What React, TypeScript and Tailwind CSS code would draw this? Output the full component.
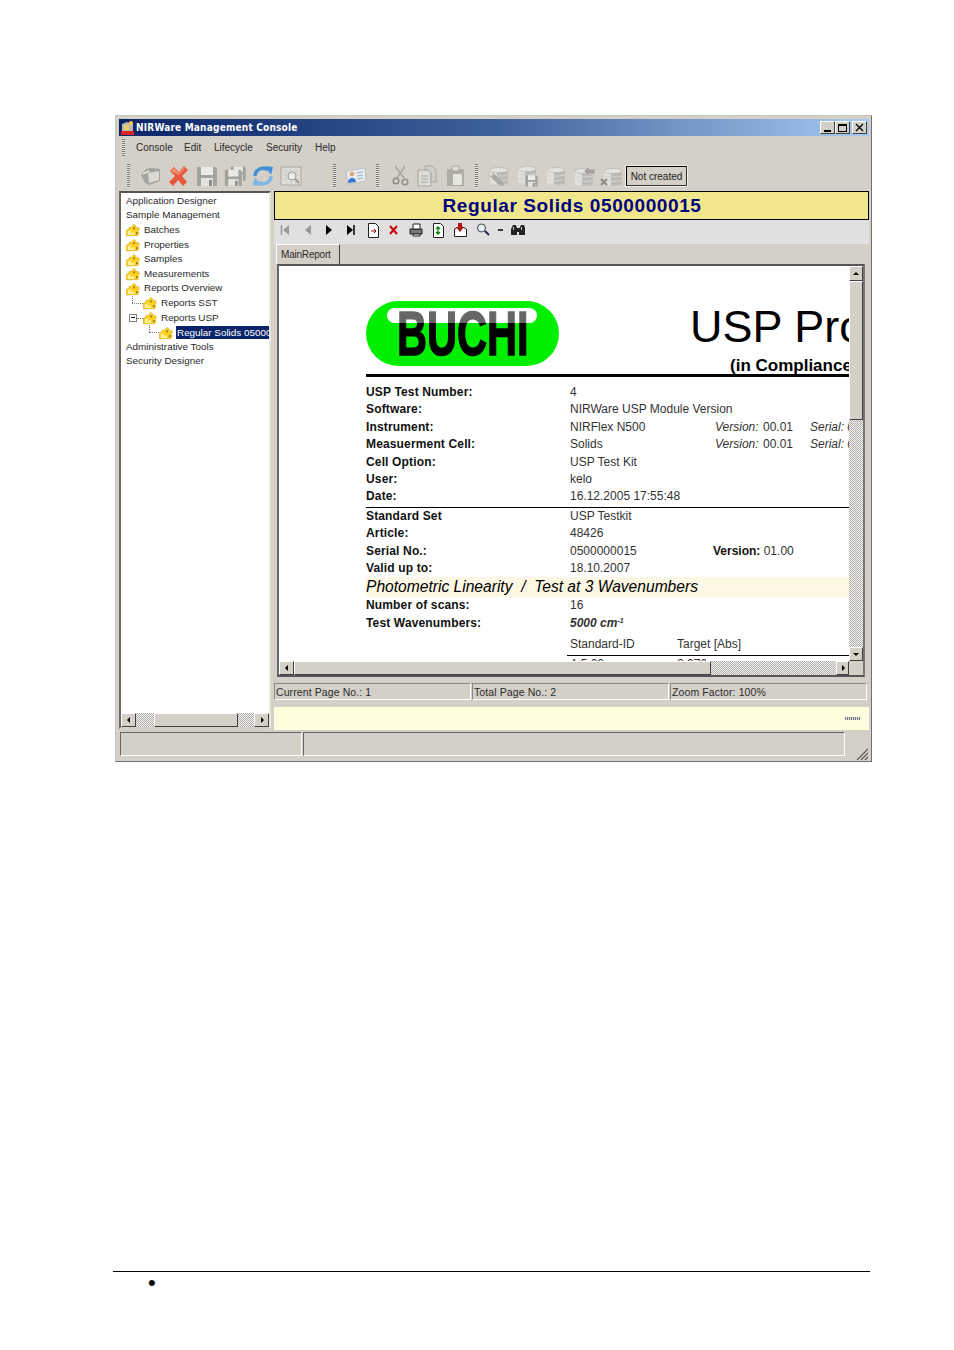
import React from "react";

const Grip = ({ h = 24 }: { h?: number }) => (
  <div className="w-[3px] shrink-0 bg-[repeating-linear-gradient(to_bottom,#777_0_1px,#e8e6e0_1px_2px)]" style={{ height: h }} />
);

const Puzzle = () => (
  <svg width="14" height="14" viewBox="0 0 14 14" className="shrink-0">
    <path d="M0.500 13V7l2-.5 1-2.500 2 .5L7.500 1.500 10 3v2l2.500-.5 1 2.500-2 1 1.500 1.500-1 3z" fill="#ffd21f" stroke="#c79a10" strokeWidth=".5" />
    <path d="M2 12V8l3-.5L4.500 10.500 8 9v3z" fill="#fff3a0" />
    <path d="M7 4l2 1-1 2zM10 9l2 1-2 1.500z" fill="#7a5c08" />
  </svg>
);

const TreeRow = ({ label, indent = 0, icon = false, box = false, sel = false, dots = 0, v = -1 }: { label: string; indent?: number; icon?: boolean; box?: boolean; sel?: boolean; dots?: number; v?: number }) => (
  <div className="h-[14.6px] flex items-center whitespace-nowrap overflow-hidden relative" style={{ paddingLeft: indent }}>
    {v >= 0 && <div className="absolute top-0 h-[7px] w-0 border-l border-dotted border-[#777]" style={{ left: v }} />}
    {dots > 0 && <div className="h-0 border-t border-dotted border-[#777] shrink-0" style={{ width: dots }} />}
    {box && (
      <>
        <div className="absolute left-[3px] top-[3px] w-[8px] h-[8px] border border-[#808080] bg-white flex items-center justify-center">
          <div className="w-[4px] h-px bg-black" />
        </div>
        <div className="absolute left-[11px] top-[7px] w-[6px] h-0 border-t border-dotted border-[#777]" />
      </>
    )}
    {icon && <Puzzle />}
    {sel ? (
      <span className="ml-[3px] bg-[#0a246a] text-white pl-px h-[13px] leading-[13px] flex-1 overflow-hidden">{label}</span>
    ) : (
      <span className={icon ? "ml-[4px]" : "ml-0"}>{label}</span>
    )}
  </div>
);

const I = ({ children, w = 22, ml = 0 }: { children: React.ReactNode; w?: number; ml?: number }) => (
  <svg width={w} height="22" viewBox="0 0 22 22" className="shrink-0" style={{ marginLeft: ml }}>
    {children}
  </svg>
);

const Db = ({ x = 0, y = 0 }: { x?: number; y?: number }) => (
  <g transform={`translate(${x} ${y})`}>
    <path d="M2 5v13c0 2 18 2 18 0V5z" fill="#bcbab4" />
    <path d="M2 5v13c0 1 4 1.600 7 1.800V6z" fill="#e0dfda" />
    <ellipse cx="11" cy="5" rx="9" ry="2.500" fill="#e4e3de" stroke="#a8a8a2" strokeWidth=".5" />
    <path d="M2 9.500c0 2 18 2 18 0M2 14c0 2 18 2 18 0" fill="none" stroke="#d6d5cf" />
  </g>
);

const Floppy = ({ x = 0, y = 0, s = 1 }: { x?: number; y?: number; s?: number }) => (
  <g transform={`translate(${x} ${y}) scale(${s})`}>
    <path d="M1 2h18l2 2v17H1z" fill="#a3a39e" />
    <path d="M5 2h12v8H5z" fill="#ebeae5" />
    <path d="M5 13h12v8H5z" fill="#e4e3de" />
    <path d="M13 15h3v6h-3z" fill="#8f8f8a" />
  </g>
);

const Row = ({ l, v, extra, it }: { l: string; v: React.ReactNode; extra?: React.ReactNode; it?: boolean }) => (
  <div className="h-[17.4px] leading-[17px] flex whitespace-nowrap">
    <div className="w-[204px] shrink-0 font-bold text-[12px] tracking-[0.15px] text-[#111]">{l}</div>
    <div className={"w-[145px] shrink-0 text-[#333] text-[12px] " + (it ? "font-bold italic" : "")}>{v}</div>
    {extra}
  </div>
);

const Ver = ({ num }: { num: string }) => (
  <>
    <div className="w-[48px] shrink-0 italic text-[#333] text-[12px]">Version:</div>
    <div className="w-[47px] shrink-0 text-[#333] text-[12px]">{num}</div>
    <div className="italic text-[#333] text-[12px]">Serial: 0</div>
  </>
);

const Arrow = ({ d }: { d: "l" | "r" | "u" | "d" }) => {
  const p = { l: "M5 1v6L2 4z", r: "M3 1v6l3-3z", u: "M1 5h6L4 2z", d: "M1 3h6L4 6z" }[d];
  return (
    <svg width="8" height="8" viewBox="0 0 8 8">
      <path d={p} fill="#000" />
    </svg>
  );
};

const SBtn = ({ d, cls = "" }: { d: "l" | "r" | "u" | "d"; cls?: string }) => (
  <div className={"bg-[#d4d0c8] border border-t-white border-l-white border-r-[#404040] border-b-[#404040] flex items-center justify-center shrink-0 " + cls}>
    <Arrow d={d} />
  </div>
);

const Dither = "bg-[repeating-conic-gradient(#b0aea8_0_25%,#f4f3f0_0_50%)] bg-[length:2px_2px]";
const Thumb = "bg-[#d4d0c8] border border-t-white border-l-white border-r-[#404040] border-b-[#404040]";

export default function App() {
  return (
    <div className="w-[954px] h-[1350px] bg-white overflow-hidden font-['Liberation_Sans',Arial,sans-serif] pt-[115px]">
      <div className="ml-[115px] w-[757px] h-[647px] border border-[#c8c6c0] border-r-[#707070] border-b-[#707070] bg-[#d4d0c8] pl-[3px] pr-[2px] pt-[3px] flex flex-col text-[9.900px] text-[#2a2a2a]">
        {/* Title bar */}
        <div className="h-[17px] shrink-0 flex items-center bg-[linear-gradient(to_right,#0a246a_0%,#3d6199_50%,#a6caf0_100%)] pl-[1px] pr-[1px]">
          <svg width="15" height="16" viewBox="0 0 15 16" className="shrink-0">
            <path d="M2 4l5-2 6 2v7H2z" fill="#b9b7ae" />
            <path d="M1 11h13v4H1z" fill="#d22" />
            <circle cx="11" cy="3" r="2" fill="#fc3" />
            <path d="M4 5h5v5H4z" fill="#e8d070" />
          </svg>
          <span className="ml-[1px] text-white font-bold text-[10.500px] tracking-[0.2px] font-['DejaVu_Sans',sans-serif] scale-x-[0.86] origin-left whitespace-nowrap">NIRWare Management Console</span>
          <div className="ml-auto flex items-center pr-[1px]">
            {["min", "max", "close"].map((k) => (
              <div key={k} className={"w-[15px] h-[13px] bg-[#d4d0c8] border border-t-white border-l-white border-r-[#404040] border-b-[#404040] flex items-center justify-center " + (k === "max" ? "mr-[2px]" : "")}>
                {k === "min" && <div className="w-[7px] h-[2px] bg-black mt-[6px]" />}
                {k === "max" && <div className="w-[9px] h-[8px] border border-black border-t-2" />}
                {k === "close" && (
                  <svg width="9" height="9" viewBox="0 0 9 9">
                    <path d="M1 1l7 7M8 1L1 8" stroke="#000" strokeWidth="1.300" />
                  </svg>
                )}
              </div>
            ))}
          </div>
        </div>
        {/* Menu */}
        <div className="h-[25px] shrink-0 flex items-center pl-[3px] pb-[3px] text-[10px]">
          <Grip h={17} />
          <span className="ml-[11px] w-[48px]">Console</span>
          <span className="w-[30px]">Edit</span>
          <span className="w-[52px]">Lifecycle</span>
          <span className="w-[49px]">Security</span>
          <span>Help</span>
        </div>
        {/* Toolbar */}
        <div className="h-[30px] shrink-0 flex items-center pl-[8px]">
          <Grip h={24} />
          <I ml={10}>
            <path d="M1 10l5-6 5-1 9 1v12l-11 4-4-2z" fill="#a3a39d" />
            <path d="M8 8l11-2v9L9 18z" fill="#dad9d3" />
            <path d="M3 9l6-3" stroke="#e8e8e4" strokeWidth="1.500" />
          </I>
          <I ml={6}>
            <path d="M2 6l4-4 5 5 5-6 4 4-6 6 5 6-4 4-5-6-5 6-4-4 6-6z" fill="#e8583c" />
            <path d="M3 6l3-3 5 5 5-6 1 1-6 7-2-1z" fill="#f2927a" />
          </I>
          <I ml={6}><Floppy /></I>
          <I ml={6}>
            <Floppy x={6} y={0} s={0.75} />
            <Floppy x={0} y={3} s={0.85} />
          </I>
          <I ml={6}>
            <path d="M3 11a8 8 0 0 1 13-6" fill="none" stroke="#3f8fd8" strokeWidth="3.500" />
            <path d="M13 1l8 1-2 8z" fill="#3f8fd8" />
            <path d="M19 11a8 8 0 0 1-13 6" fill="none" stroke="#7fb5e5" strokeWidth="3.500" />
            <path d="M9 21l-8-1 2-8z" fill="#7fb5e5" />
          </I>
          <I ml={6}>
            <path d="M1 2h20v18H1z" fill="#dedDd8" stroke="#aaa9a3" />
            <path d="M1 6h20M1 10h20M1 14h20M6 2v18M11 2v18M16 2v18" stroke="#c4c3bd" strokeWidth=".6" />
            <circle cx="12" cy="11" r="4" fill="#ecebe7" stroke="#9a9a95" />
            <path d="M15 14l4 4" stroke="#9a9a95" strokeWidth="2" />
          </I>
          <div className="ml-[31px]"><Grip h={24} /></div>
          <I ml={9}>
            <path d="M1 6l19-3 1 13-18 3z" fill="#e6ebf0" stroke="#a8b0b8" strokeWidth=".6" />
            <circle cx="7" cy="9" r="2.300" fill="#e0a868" />
            <path d="M3 18c-.5-6 8-7 8-1z" fill="#3a78d0" />
            <path d="M12 8l6-1M12 11l6-1M12 14l6-1" stroke="#a0b0bc" />
          </I>
          <div className="ml-[9px]"><Grip h={24} /></div>
          <I ml={11}>
            <path d="M5 1l9 12M15 1L7 13" stroke="#a8a8a2" strokeWidth="1.500" fill="none" />
            <circle cx="6" cy="16" r="2.800" fill="none" stroke="#8f8f8a" strokeWidth="1.500" />
            <circle cx="15" cy="17" r="2.800" fill="none" stroke="#8f8f8a" strokeWidth="1.500" />
          </I>
          <I ml={5}>
            <path d="M1 5h10l3 3v13H1z" fill="#dddcd6" stroke="#a5a5a0" />
            <path d="M8 1h7l4 4v12h-5V8l-3-3H8z" fill="#cfcec8" stroke="#a5a5a0" />
            <path d="M4 11h7M4 14h7M4 17h7" stroke="#a5a5a0" />
          </I>
          <I ml={7}>
            <path d="M1 4h17v17H1z" fill="#aeada6" />
            <path d="M6 1h7v5H6z" fill="#dddcd6" stroke="#8f8f8a" strokeWidth=".6" />
            <path d="M7 9h9v11H7z" fill="#e6e5e0" />
          </I>
          <div className="ml-[7px]"><Grip h={24} /></div>
          <I ml={9}>
            <Db x={1} y={0} />
            <path d="M1 9l4-2 10 9 2 4-3 1-4-3z" fill="#a9a8a2" />
            <circle cx="4" cy="9" r="2" fill="#d8d7d2" />
          </I>
          <I ml={7}>
            <Db x={0} y={-1} />
            <Floppy x={9} y={9} s={0.6} />
          </I>
          <I ml={7}><Db /></I>
          <I ml={8}>
            <Db x={-2} y={1} />
            <path d="M9 6l5-5v3h6v5h-6v3z" fill="#a3a29c" stroke="#e4e3de" strokeWidth=".5" />
          </I>
          <I ml={3}>
            <Db x={2} y={1} />
            <path d="M1 14l6 6M7 14l-6 6" stroke="#8f8f8a" strokeWidth="2.200" />
          </I>
          <div className="ml-[4px] w-[61px] h-[20px] border border-t-black border-l-black border-r-[#333] border-b-[#333] outline-1 outline-[#f0eee8] flex items-center justify-center text-[10px] whitespace-nowrap text-[#222]">Not created</div>
        </div>
        {/* Main */}
        <div className="h-[540px] shrink-0 flex items-start">
          {/* Tree */}
          <div className="w-[152px] h-[538px] shrink-0 bg-white border-2 border-t-[#555] border-l-[#666] border-r-[#e8e6e0] border-b-[#d4d0c8] flex flex-col">
            <div className="flex-1 pl-[5px] pt-[1px] overflow-hidden">
              <TreeRow label="Application Designer" />
              <TreeRow label="Sample Management" />
              <TreeRow label="Batches" icon />
              <TreeRow label="Properties" icon />
              <TreeRow label="Samples" icon />
              <TreeRow label="Measurements" icon />
              <TreeRow label="Reports Overview" icon />
              <TreeRow label="Reports SST" icon indent={6} dots={11} v={6} />
              <TreeRow label="Reports USP" icon indent={17} box />
              <TreeRow label="Regular Solids 0500000015" icon indent={23} dots={10} v={23} sel />
              <TreeRow label="Administrative Tools" />
              <TreeRow label="Security Designer" />
            </div>
            <div className="h-[14px] shrink-0 flex bg-white">
              <SBtn d="l" cls="w-[15px] h-[14px]" />
              <div className={"w-[18px] " + Dither} />
              <div className={"w-[84px] " + Thumb} />
              <div className={"flex-1 " + Dither} />
              <SBtn d="r" cls="w-[15px] h-[14px]" />
            </div>
          </div>
          {/* Right */}
          <div className="ml-[3px] w-[595px] h-[539px] shrink-0 flex flex-col">
            <div className="h-[29px] shrink-0 bg-[#f0e68c] border border-black flex items-center justify-center pl-[1px] pt-[2px]">
              <span className="font-bold text-[19px] tracking-[0.6px] text-[#000080] whitespace-nowrap">Regular Solids 0500000015</span>
            </div>
            <div className="h-[24px] shrink-0 bg-[#e0e0e0] pl-[6px] pt-[2px]">
              <svg width="250" height="16" viewBox="0 0 250 16" className="block">
                <path d="M1.500 3v10" stroke="#999" strokeWidth="1.500" />
                <path d="M9 3v10L3 8z" fill="#999" />
                <path d="M31 3v10l-6-5z" fill="#999" />
                <path d="M46 3v10l6-5z" fill="#000" />
                <path d="M67 3v10l6-5z" fill="#000" />
                <path d="M74 3v10" stroke="#000" strokeWidth="1.500" />
                <path d="M88.500 1.500h7l3 3v11h-10z" fill="#fff" stroke="#222" />
                <path d="M91 9h5M94 7l2 2-2 2" stroke="#a00" fill="none" />
                <path d="M110 4l7 8M117 4l-7 8" stroke="#c00" strokeWidth="2" />
                <path d="M130 7h12v5h-12z" fill="#777" stroke="#222" />
                <path d="M133 2h7v5h-7zM133 12h7v2h-7z" fill="#fff" stroke="#222" />
                <path d="M153.500 1.500h7l3 3v11h-10z" fill="#fff" stroke="#222" />
                <path d="M156 7l2-2 2 2M160 10l-2 2-2-2M158 5v7" stroke="#080" fill="none" strokeWidth="1.300" />
                <path d="M174.500 7l6-3 6 3v7.500h-12z" fill="#fff" stroke="#222" />
                <path d="M178 1h4v4h2l-4 5-4-5h2z" fill="#b01818" />
                <circle cx="201.500" cy="6" r="4" fill="#e4eefa" stroke="#444" />
                <path d="M205 9l4 4" stroke="#225" strokeWidth="2" />
                <path d="M218 8h5" stroke="#000" strokeWidth="1.500" />
                <path d="M232 5l1-2h3l1 3v7h-6V7zM240 5l1-2h3l1 3v7h-6V7z" fill="#222" />
                <path d="M236 6h5v4h-5z" fill="#222" />
                <path d="M233 5h1v3h-1zM241 5h1v3h-1z" fill="#ccc" />
              </svg>
            </div>
            <div className="h-[20px] shrink-0 flex">
              <div className="ml-[2px] w-[64px] h-[20px] border border-t-white border-l-white border-r-[#404040] border-b-0 flex items-center justify-start pl-[4px] text-[10px] tracking-[-0.2px]">MainReport</div>
            </div>
            {/* report frame */}
            <div className="ml-[3px] w-[588px] h-[413px] shrink-0 border-2 border-t-[#555] border-l-[#666] border-r-[#777] border-b-[#555] flex flex-col">
              <div className="h-[395px] shrink-0 flex">
                <div className="w-[570px] shrink-0 bg-white overflow-hidden pl-[87px] pt-[35px]">
                  <div className="w-[520px] h-[75px] flex relative">
                    <div className="w-[193px] h-[65px] rounded-full bg-[#00ee00] relative overflow-hidden shrink-0">
                      <div className="absolute left-[21px] top-[7px] w-[150px] h-[15px] rounded-full bg-white" />
                      <div className="absolute left-0 top-[2px] w-[193px] h-[60px] flex items-center justify-center">
                        <span className="font-bold text-[63px] leading-[60px] text-black scale-x-[0.66] whitespace-nowrap [-webkit-text-stroke:1.5px_#000]">BUCHI</span>
                      </div>
                      <div className="absolute left-[21px] top-[7px] w-[150px] h-[15px] rounded-full bg-white/40" />
                    </div>
                    <div className="absolute left-[324px] top-[-4px] text-[45px] leading-[60px] text-black whitespace-nowrap">USP Process</div>
                    <div className="absolute left-[364px] top-[55px] text-[17px] leading-[20px] font-bold text-black whitespace-nowrap">(in Compliance with</div>
                    <div className="absolute left-0 top-[73px] w-[520px] h-[3px] bg-black" />
                  </div>
                  <div className="w-[483px] pt-[8px] overflow-hidden">
                    <Row l="USP Test Number:" v="4" />
                    <Row l="Software:" v="NIRWare USP Module Version" />
                    <Row l="Instrument:" v="NIRFlex N500" extra={<Ver num="00.01" />} />
                    <Row l="Measuerment Cell:" v="Solids" extra={<Ver num="00.01" />} />
                    <Row l="Cell Option:" v="USP Test Kit" />
                    <Row l="User:" v="kelo" />
                    <Row l="Date:" v="16.12.2005  17:55:48" />
                    <div className="h-px bg-black mt-[1px]" />
                    <Row l="Standard Set" v="USP Testkit" />
                    <Row l="Article:" v="48426" />
                    <Row l="Serial No.:" v="0500000015" extra={<div className="-ml-[2px] whitespace-nowrap text-[12px] text-[#333]"><b className="text-[#111]">Version:</b> 01.00</div>} />
                    <Row l="Valid up to:" v="18.10.2007" />
                    <div className="h-[20px] leading-[20px] bg-[#fdf8e4] italic text-[15.600px] text-black whitespace-pre">Photometric Linearity  /  Test at 3 Wavenumbers</div>
                    <Row l="Number of scans:" v="16" />
                    <Row l="Test Wavenumbers:" v={<span>5000 cm<sup className="text-[7px]">-1</sup></span>} it />
                    <div className="h-[23px] ml-[201px] flex items-end pl-[3px] pb-[2px] text-[12px] text-[#333]">
                      <span className="w-[107px]">Standard-ID</span>
                      <span>Target [Abs]</span>
                    </div>
                    <div className="h-px bg-black ml-[201px]" />
                    <div className="h-[6px] ml-[204px] flex text-[12px] text-[#333] leading-[12px] overflow-hidden pt-[2px]">
                      <span className="w-[107px]">A 5 02</span>
                      <span>2.976</span>
                    </div>
                  </div>
                </div>
                <div className="w-[14px] shrink-0 flex flex-col">
                  <SBtn d="u" cls="h-[15px]" />
                  <div className={"h-[139px] " + Thumb} />
                  <div className={"flex-1 " + Dither} />
                  <SBtn d="d" cls="h-[14px]" />
                </div>
              </div>
              <div className="h-[14px] shrink-0 flex w-[570px]">
                <SBtn d="l" cls="w-[15px] h-[14px]" />
                <div className={"w-[417px] " + Thumb} />
                <div className={"flex-1 " + Dither} />
                <SBtn d="r" cls="w-[13px] h-[14px]" />
              </div>
            </div>
            <div className="h-[6px] shrink-0" />
            <div className="h-[17px] shrink-0 flex gap-px pr-[1px] text-[10.500px] tracking-[0.1px]">
              {["Current Page No.: 1", "Total Page No.: 2", "Zoom Factor: 100%"].map((t) => (
                <div key={t} className="w-[197px] h-[17px] border border-t-[#888] border-l-[#888] border-r-white border-b-white pl-[1px] leading-[16px] whitespace-nowrap">{t}</div>
              ))}
            </div>
            <div className="h-[7px] shrink-0" />
            <div className="flex-1 bg-[#ffffe0] flex items-center justify-end pr-[8px]">
              <div className="w-[16px] h-[3px] bg-[repeating-linear-gradient(to_right,#777_0_1px,#ddd_1px_2px)]" />
            </div>
          </div>
        </div>
        {/* Status bar */}
        <div className="h-[30px] shrink-0 flex pt-[1px] pl-[1px]">
          <div className="w-[182px] h-[24px] border border-t-[#666] border-l-[#666] border-r-white border-b-white" />
          <div className="ml-[1px] w-[542px] h-[24px] border border-t-[#666] border-l-[#666] border-r-white border-b-white" />
          <div className="flex-1 flex items-end justify-end pr-[1px] pb-[1px]">
            <svg width="13" height="13" viewBox="0 0 13 13">
              <path d="M2 13L13 2M6 13l7-7M10 13l3-3" stroke="#555" strokeWidth="1.200" />
            </svg>
          </div>
        </div>
      </div>
      {/* Page footer */}
      <div className="ml-[113px] mt-[509px] w-[757px] border-t border-black pt-[1px] pl-[35px] text-[22px] leading-[20px] text-black">•</div>
    </div>
  );
}
